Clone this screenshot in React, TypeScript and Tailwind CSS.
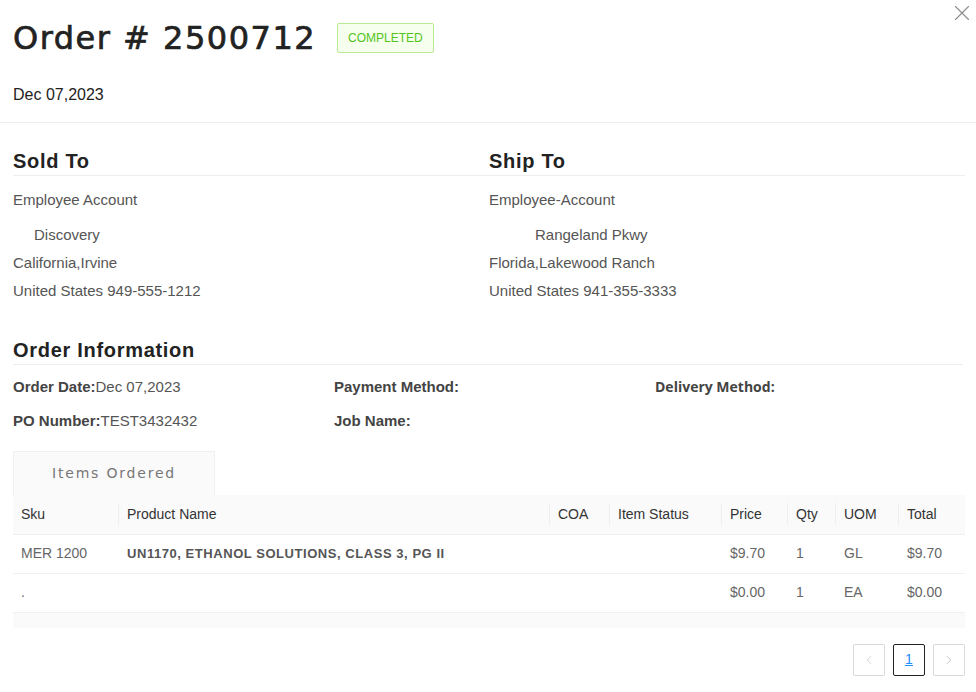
import { X, ChevronLeft, ChevronRight } from 'lucide-react';

type Row = {
  sku: string;
  name: string;
  coa: string;
  status: string;
  price: string;
  qty: string;
  uom: string;
  total: string;
};

const rows: Row[] = [
  { sku: 'MER 1200', name: 'UN1170, ETHANOL SOLUTIONS, CLASS 3, PG II', coa: '', status: '', price: '$9.70', qty: '1', uom: 'GL', total: '$9.70' },
  { sku: '.', name: '', coa: '', status: '', price: '$0.00', qty: '1', uom: 'EA', total: '$0.00' },
];

const columns = [
  { label: 'Sku', width: 'w-[105px]' },
  { label: 'Product Name', width: 'w-[431px]' },
  { label: 'COA', width: 'w-[60px]' },
  { label: 'Item Status', width: 'w-[112px]' },
  { label: 'Price', width: 'w-[66px]' },
  { label: 'Qty', width: 'w-[48px]' },
  { label: 'UOM', width: 'w-[63px]' },
  { label: 'Total', width: 'w-[67px]' },
];

const Address = ({ title, lines, indent }: { title: string; lines: string[]; indent: string }) => (
  <div>
    <h3 className="text-[20px] leading-[24px] font-bold tracking-[0.7px] text-[#222] pb-[2px] border-b border-[#eeeeee]">
      {title}
    </h3>
    <div className="mt-[10px] text-[15px] leading-[28px] text-[#555]">
      <div>{lines[0]}</div>
      <div className={`mt-[7px] ${indent}`}>{lines[1]}</div>
      <div>{lines[2]}</div>
      <div>{lines[3]}</div>
    </div>
  </div>
);

export default function App() {
  return (
    <div className="relative w-[976px] min-h-[692px] bg-white font-['Liberation_Sans',Arial,sans-serif]">
      {/* close button */}
      <button className="absolute right-[1px] top-0 text-[#8c8c8c]">
        <X size={26} strokeWidth={1} />
      </button>

      {/* header */}
      <div className="px-[13px] pt-[18px] pb-[16px] border-b border-[#eeeeee]">
        <div className="flex items-center gap-[21px]">
          <h1 className="font-['DejaVu_Sans',sans-serif] text-[32px] leading-[40px] tracking-[1.5px] text-[#222] [-webkit-text-stroke:0.7px_#222]">
            Order # 2500712
          </h1>
          <span className="h-[30px] px-[10px] flex items-center border border-[#b7eb8f] bg-[#f6ffed] text-[#52c41a] text-[12px] rounded-[2px]">
            COMPLETED
          </span>
        </div>
        <div className="mt-[26px] text-[16px] leading-[22px] text-[#222]">Dec 07,2023</div>
      </div>

      <div className="px-[13px] pt-[26px]">
        {/* addresses */}
        <div className="grid grid-cols-[476px_476px]">
          <Address
            title="Sold To"
            indent="pl-[21px]"
            lines={['Employee Account', 'Discovery', 'California,Irvine', 'United States 949-555-1212']}
          />
          <Address
            title="Ship To"
            indent="pl-[46px]"
            lines={['Employee-Account', 'Rangeland Pkwy', 'Florida,Lakewood Ranch', 'United States 941-355-3333']}
          />
        </div>

        {/* order information */}
        <div className="mt-[33px]">
          <h3 className="text-[20px] leading-[24px] font-bold tracking-[0.7px] text-[#222] pb-[2px] border-b border-[#eeeeee]">
            Order Information
          </h3>
          <div className="mt-[12px] grid grid-cols-[321px_321px_321px] gap-y-[14px] text-[15px] leading-[20px]">
            <div className="text-[#555]">
              <span className="font-bold text-[#444]">Order Date:</span>Dec 07,2023
            </div>
            <div className="font-bold text-[#444]">Payment Method:</div>
            <div className="font-['Open_Sans',sans-serif] text-[14px] font-bold text-[#444]">Delivery Method:</div>
            <div className="text-[#555]">
              <span className="font-bold text-[#444]">PO Number:</span>TEST3432432
            </div>
            <div className="font-bold text-[#444]">Job Name:</div>
            <div />
          </div>
        </div>

        {/* tab */}
        <div className="mt-[20px] flex">
          <div className="w-[202px] h-[44px] flex items-center justify-center bg-[#fafafa] border border-b-0 border-[#f0f0f0] font-['DejaVu_Sans',sans-serif] text-[14px] tracking-[1.8px] text-[#777]">
            Items Ordered
          </div>
        </div>

        {/* table */}
        <table className="w-[952px] table-fixed border-collapse text-[14px]">
          <colgroup>
            {columns.map((c) => (
              <col key={c.label} className={c.width} />
            ))}
          </colgroup>
          <thead>
            <tr className="bg-[#fafafa] h-[39px] border-b border-[#f0f0f0]">
              {columns.map((c, i) => (
                <th key={c.label} className="relative text-left font-normal text-[#333] pl-[8px] pr-[4px]">
                  {i > 0 && <span className="absolute left-0 top-[8px] h-[22px] w-px bg-[#eeeeee]" />}
                  <span className={i > 0 ? 'pl-[1px]' : ''}>{c.label}</span>
                </th>
              ))}
            </tr>
          </thead>
          <tbody>
            {rows.map((r, idx) => (
              <tr key={idx} className="h-[39px] border-b border-[#f0f0f0] text-[#666]">
                <td className="pl-[8px]">{r.sku}</td>
                <td className="pl-[9px] font-bold text-[13px] tracking-[0.55px] text-[#555]">{r.name}</td>
                <td className="pl-[9px]">{r.coa}</td>
                <td className="pl-[9px]">{r.status}</td>
                <td className="pl-[9px]">{r.price}</td>
                <td className="pl-[9px]">{r.qty}</td>
                <td className="pl-[9px]">{r.uom}</td>
                <td className="pl-[9px]">{r.total}</td>
              </tr>
            ))}
          </tbody>
        </table>
        <div className="w-[952px] h-[15px] bg-[#fafafa]" />

        {/* pagination */}
        <div className="w-[952px] mt-[16px] flex justify-end gap-[8px]">
          <button className="w-[32px] h-[32px] flex items-center justify-center border border-[#d9d9d9] rounded-[2px] text-[#ccc]">
            <ChevronLeft size={14} strokeWidth={1.5} />
          </button>
          <button className="w-[32px] h-[32px] flex items-center justify-center border border-[#222] rounded-[2px] text-[14px] text-[#1890ff] underline">
            1
          </button>
          <button className="w-[32px] h-[32px] flex items-center justify-center border border-[#d9d9d9] rounded-[2px] text-[#bbb]">
            <ChevronRight size={14} strokeWidth={1.5} />
          </button>
        </div>
      </div>
    </div>
  );
}
